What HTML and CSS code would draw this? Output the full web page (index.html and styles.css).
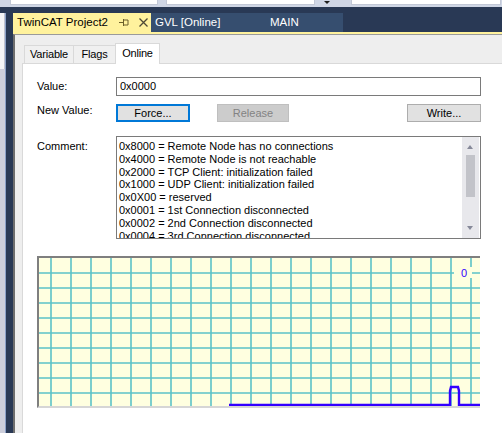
FILE: index.html
```html
<!DOCTYPE html>
<html lang="en">
<head>
	<meta charset="UTF-8">
	<title>TwinCAT Project2 - Online</title>
	<link rel="stylesheet" href="styles.css">
</head>
<body>
	<div class="toolbar">
		<span class="combo c1"></span>
		<span class="combo c2"></span>
		<span class="drop"></span>
		<span class="combo c3"></span>
	</div>

	<div class="shell">
		<div class="side"><div class="sideBox"></div></div>

		<div class="doc">
			<div class="docTabs">
				<div class="dtab active">
					<span>TwinCAT Project2</span>
					<svg class="pin" width="10" height="9" viewBox="0 0 10 9"><path d="M0 4.5H4M4.5 1V8M4.5 2H9V7H4.5" fill="none" stroke="#6b5f2a" stroke-width="1"/></svg>
					<svg class="close" width="9" height="9" viewBox="0 0 9 9"><path d="M0.5 0.5L8.5 8.5M8.5 0.5L0.5 8.5" stroke="#4f4a35" stroke-width="1.3"/></svg>
				</div>
				<div class="dtab gvl">GVL [Online]</div>
				<div class="dtab main">MAIN</div>
			</div>
			<div class="docLine"></div>

			<div class="docBody">
				<div class="tabs">
					<div class="tab t1">Variable</div>
					<div class="tab t2">Flags</div>
					<div class="tab t3 on">Online</div>
				</div>

				<div class="page">
					<div class="form">
						<label class="lbl">Value:</label>
						<div class="valueBox">0x0000</div>

						<label class="lbl lblNew">New Value:</label>
						<div class="btnRow">
							<button class="btn force">Force...</button>
							<button class="btn release" disabled>Release</button>
							<button class="btn write">Write...</button>
						</div>

						<label class="lbl lblComment">Comment:</label>
						<div class="commentBox">
							<div class="commentTxt">
								<p>0x8000 = Remote Node has no connections</p>
								<p>0x4000 = Remote Node is not reachable</p>
								<p>0x2000 = TCP Client: initialization failed</p>
								<p>0x1000 = UDP Client: initialization failed</p>
								<p>0x0X00 = reserved</p>
								<p>0x0001 = 1st Connection disconnected</p>
								<p>0x0002 = 2nd Connection disconnected</p>
								<p>0x0004 = 3rd Connection disconnected</p>
							</div>
							<div class="scroll">
								<span class="arrow up"></span>
								<span class="thumb"></span>
								<span class="arrow down"></span>
							</div>
						</div>

						<div class="graph">
							<svg width="441" height="148" viewBox="0 0 441 148">
								<rect width="441" height="148" fill="#ffffe0"/>
								<g stroke="#5cc2c7" stroke-width="1.6" fill="none">
									<path d="M0 15H441M0 30H441M0 45H441M0 60H441M0 75H441M0 90H441M0 105H441M0 120H441M0 135H441"/>
									<path d="M12 0V148M32 0V148M52 0V148M72 0V148M92 0V148M112 0V148M132 0V148M152 0V148M172 0V148M192 0V148M212 0V148M232 0V148M252 0V148M272 0V148M292 0V148M312 0V148M332 0V148M352 0V148M372 0V148M392 0V148M412 0V148M432 0V148"/>
								</g>
								<rect x="415" y="9" width="18" height="11" fill="#ffffe0"/>
								<text x="422" y="19" font-family="Liberation Sans, sans-serif" font-size="11" fill="#3300ff">0</text>
								<path d="M190 147H411V133L412 129H419L420 133V147H441" fill="none" stroke="#3300ff" stroke-width="2.4"/>
							</svg>
						</div>
					</div>
				</div>
			</div>
		</div>
	</div>
</body>
</html>
```

FILE: styles.css
```css
/*reset*/
*{
	margin: 0;
	padding: 0;
	box-sizing: border-box;
}
body{
	width: 502px;
	height: 433px;
	overflow: hidden;
	background-color: #293955;
	font-family: "Liberation Sans", Arial, sans-serif;
	font-size: 11px;
	color: #000;
}

/*toolbar*/
.toolbar{
	display: flex;
	height: 7px;
	background-color: #cfd6e5;
}
.combo{
	display: block;
	height: 5px;
	background-color: #fff;
	border: 1px solid #c2c8d6;
	border-top: none;
}
.c1{ width: 148px; margin-left: 10px; }
.c2{ width: 149px; margin-left: 8px; }
.c3{ width: 150px; margin-left: 14px; }
.drop{
	display: block;
	width: 0;
	height: 0;
	margin: 1px 7px 0 9px;
	border-left: 3px solid transparent;
	border-right: 3px solid transparent;
	border-top: 3px solid #1e1e1e;
}

/*shell*/
.shell{
	display: flex;
	height: 426px;
	padding-top: 6px;
}
.side{
	width: 6px;
	background-color: #cccedb;
	margin-right: 7px;
	border-right: 1px solid #8aa0c8;
}
.sideBox{
	height: 56px;
	background-color: #f5f5f7;
	border-right: 1px solid #c0c3cf;
}
.doc{
	flex: 1;
	display: flex;
	flex-direction: column;
	overflow: hidden;
}

/*document tabs*/
.docTabs{
	display: flex;
	height: 19px;
	font-size: 11.5px;
	line-height: 19px;
}
.dtab{
	display: flex;
	align-items: center;
	color: #fff;
	background-color: #364e6f;
}
.dtab.active{
	width: 138px;
	padding-left: 4px;
	color: #000;
	background-color: #fff29d;
}
.pin{
	margin-left: 11px;
}
.close{
	margin-left: 10px;
}
.gvl{
	width: 102px;
	padding-left: 4px;
}
.main{
	width: 90px;
	padding-left: 17px;
}
.docLine{
	height: 2px;
	background-color: #fff29d;
}

/*document body*/
.docBody{
	flex: 1;
	display: flex;
	flex-direction: column;
	background-color: #eeeeee;
	border-top: 1px solid #9a9a9a;
	border-left: 2px solid #6e6e6e;
	padding: 8px 0 0 7px;
}
.tabs{
	display: flex;
	align-items: flex-end;
	height: 20px;
	padding-left: 2px;
	position: relative;
	z-index: 1;
}
.tab{
	height: 18px;
	line-height: 17px;
	text-align: center;
	background-color: #f0f0f0;
	border: 1px solid #d9d9d9;
	border-bottom: none;
	letter-spacing: -0.2px;
}
.t1{ width: 50px; }
.t2{ width: 43px; margin-left: -1px; }
.t3{ width: 45px; margin-left: -1px; }
.tab.on{
	height: 21px;
	line-height: 19px;
	margin-bottom: -1px;
	background-color: #fff;
}
.page{
	flex: 1;
	background-color: #fff;
	border-top: 1px solid #d9d9d9;
	border-left: 1px solid #d9d9d9;
	padding: 13px 0 0 14px;
}

/*form*/
.form{
	display: grid;
	grid-template-columns: 79px 365px;
}
.lbl{
	line-height: 13px;
	align-self: center;
}
.lblNew{
	align-self: start;
	margin-top: 8px;
}
.lblComment{
	align-self: start;
	margin-top: 14px;
	padding-top: 4px;
}
.valueBox{
	height: 19px;
	line-height: 17px;
	padding-left: 3px;
	border: 1px solid #7a7a7a;
}
.btnRow{
	display: flex;
	margin-top: 8px;
	height: 18px;
}
.btn{
	height: 18px;
	font-family: "Liberation Sans", Arial, sans-serif;
	font-size: 11px;
	color: #000;
	background-color: #e1e1e1;
	border: 1px solid #adadad;
}
.force{
	width: 74px;
	border: 2px solid #0078d7;
}
.release{
	width: 72px;
	margin-left: 27px;
	color: #838383;
	background-color: #cccccc;
	border-color: #bfbfbf;
}
.write{
	width: 74px;
	margin-left: auto;
}

/*comment*/
.commentBox{
	display: flex;
	height: 103px;
	margin-top: 14px;
	border: 1px solid #7a7a7a;
	overflow: hidden;
}
.commentTxt{
	flex: 1;
	padding: 3px 0 0 2px;
	line-height: 12.8px;
	overflow: hidden;
	white-space: nowrap;
}
.scroll{
	position: relative;
	width: 17px;
	margin-right: 1px;
	background-color: #e8e8ec;
}
.arrow{
	position: absolute;
	left: 5px;
	width: 0;
	height: 0;
	border-left: 3px solid transparent;
	border-right: 3px solid transparent;
}
.up{
	top: 8px;
	border-bottom: 4px solid #868999;
}
.down{
	bottom: 8px;
	border-top: 4px solid #868999;
}
.thumb{
	position: absolute;
	left: 4px;
	top: 18px;
	width: 9px;
	height: 42px;
	background-color: #c2c3c9;
}

/*graph*/
.graph{
	grid-column: 1 / 3;
	width: 443px;
	height: 152px;
	margin-top: 17px;
	border-top: 2px solid #7f7f7f;
	border-left: 2px solid #7f7f7f;
	border-bottom: 2px solid #d6d6d6;
	font-size: 0;
}
```
